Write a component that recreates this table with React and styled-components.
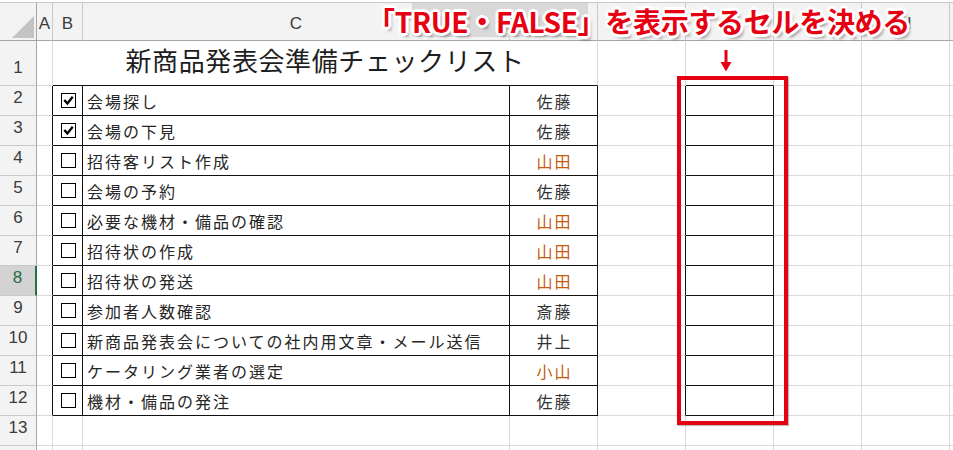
import React from "react";
import styled, { createGlobalStyle } from "styled-components";

const GlobalStyle = createGlobalStyle`
  html, body {
    margin: 0;
    padding: 0;
    background: #ffffff;
  }
  body {
    font-family: "Noto Sans CJK JP", "Liberation Sans", sans-serif;
  }
`;

const LIGHT = "#dadada";
const HEAD_LINE = "#c9c9c9";
const BLACK = "#111111";

const COLS = ["A", "B", "C", "D", "E", "F", "G", "H", "I"];
const HEAD_LABELS = { A: "A", B: "B", C: "C", H: "H" };

const tasks = [
  { done: true, task: "会場探し", who: "佐藤" },
  { done: true, task: "会場の下見", who: "佐藤" },
  { done: false, task: "招待客リスト作成", who: "山田" },
  { done: false, task: "会場の予約", who: "佐藤" },
  { done: false, task: "必要な機材・備品の確認", who: "山田" },
  { done: false, task: "招待状の作成", who: "山田" },
  { done: false, task: "招待状の発送", who: "山田" },
  { done: false, task: "参加者人数確認", who: "斎藤" },
  { done: false, task: "新商品発表会についての社内用文章・メール送信", who: "井上" },
  { done: false, task: "ケータリング業者の選定", who: "小山" },
  { done: false, task: "機材・備品の発注", who: "佐藤" },
];

const orange = ["山田", "小山"];

function App() {
  const renderRow = (n) => {
    const inTable = n >= 2 && n <= 12;
    const item = inTable ? tasks[n - 2] : null;
    const cells = [];
    cells.push(
      <RowHead key={"h" + n} $active={n === 8}>
        {n <= 13 ? n : ""}
      </RowHead>
    );

    if (n === 1) {
      cells.push(<Cell key="A" />);
      cells.push(
        <Title key="title" $bottom={BLACK}>
          新商品発表会準備チェックリスト
        </Title>
      );
      cells.push(<Cell key="E" />);
      cells.push(<Cell key="F" $bottom={BLACK} />);
      cells.push(<Cell key="G" />);
      cells.push(<Cell key="H" />);
      cells.push(<Cell key="I" />);
      return cells;
    }

    COLS.forEach((c) => {
      if (!inTable) {
        cells.push(<Cell key={c} />);
        return;
      }
      if (c === "A" || c === "E") {
        cells.push(<Cell key={c} $right={BLACK} />);
      } else if (c === "B") {
        cells.push(
          <Cell key={c} $right={BLACK} $bottom={BLACK} $center>
            <CheckBox>
              {item.done && (
                <svg width="13" height="13" viewBox="0 0 13 13">
                  <path
                    d="M3 6.8 L5.4 9.4 L10 3.6"
                    fill="none"
                    stroke="#000"
                    strokeWidth="2.3"
                    strokeLinecap="square"
                  />
                </svg>
              )}
            </CheckBox>
          </Cell>
        );
      } else if (c === "C") {
        cells.push(
          <TaskCell key={c} $right={BLACK} $bottom={BLACK}>
            {item.task}
          </TaskCell>
        );
      } else if (c === "D") {
        cells.push(
          <NameCell
            key={c}
            $right={BLACK}
            $bottom={BLACK}
            $orange={orange.includes(item.who)}
          >
            {item.who}
          </NameCell>
        );
      } else if (c === "F") {
        cells.push(<Cell key={c} $right={BLACK} $bottom={BLACK} />);
      } else {
        cells.push(<Cell key={c} />);
      }
    });
    return cells;
  };

  const rowNums = Array.from({ length: 14 }, (_, i) => i + 1);

  return (
    <>
      <GlobalStyle />
      <Sheet>
        <Grid>
          <Corner>
            <svg width="22" height="22" viewBox="0 0 22 22">
              <polygon points="22,0 22,22 0,22" fill="#c3c3c3" />
            </svg>
          </Corner>
          {COLS.map((c) => (
            <ColHead key={c}>{HEAD_LABELS[c] || ""}</ColHead>
          ))}
          {rowNums.map((n) => renderRow(n))}
        </Grid>

        <HeaderShade />
        <Callout>「TRUE・FALSE」を表示するセルを決める</Callout>
        <Arrow>
          <svg width="12" height="22" viewBox="0 0 12 22">
            <rect x="4.5" y="0" width="3" height="14" fill="#e60012" />
            <polygon points="0.5,12 11.5,12 6,21.5" fill="#e60012" />
          </svg>
        </Arrow>
        <Highlight />
      </Sheet>
    </>
  );
}

export default App;

const Sheet = styled.div`
  position: relative;
  width: 953px;
  height: 450px;
  overflow: hidden;
  padding-top: 2px;
  box-sizing: border-box;
`;

const Grid = styled.div`
  display: grid;
  grid-template-columns: 37px 16px 30px 427px 88px 88px 88px 88px 88px 40px;
  grid-template-rows: 39px 45px repeat(13, 30px);
`;

const Cell = styled.div`
  box-sizing: border-box;
  border-right: 1px solid ${(p) => p.$right || LIGHT};
  border-bottom: 1px solid ${(p) => p.$bottom || LIGHT};
  display: flex;
  align-items: center;
  justify-content: ${(p) => (p.$center ? "center" : "flex-start")};
  min-width: 0;
  overflow: visible;
  white-space: nowrap;
`;

const Corner = styled.div`
  box-sizing: border-box;
  background: #f3f3f3;
  border-top: 1px solid ${HEAD_LINE};
  border-right: 1px solid #a6a6a6;
  border-bottom: 1px solid #a6a6a6;
  display: flex;
  align-items: flex-end;
  justify-content: flex-end;
  padding: 0 2px 2px 0;
`;

const ColHead = styled.div`
  box-sizing: border-box;
  background: #f3f3f3;
  border-top: 1px solid ${HEAD_LINE};
  border-right: 1px solid ${HEAD_LINE};
  border-bottom: 1px solid #a6a6a6;
  display: flex;
  align-items: flex-end;
  justify-content: center;
  padding-bottom: 6px;
  font-family: "Liberation Sans", Arial, sans-serif;
  font-size: 17px;
  color: #3b3b3b;
`;

const RowHead = styled.div`
  box-sizing: border-box;
  background: ${(p) => (p.$active ? "#d3d3d3" : "#f3f3f3")};
  border-right: ${(p) => (p.$active ? "2px solid #217346" : "1px solid #a6a6a6")};
  border-bottom: 1px solid ${HEAD_LINE};
  display: flex;
  align-items: flex-end;
  justify-content: center;
  padding-bottom: 7px;
  font-family: "Liberation Sans", Arial, sans-serif;
  font-size: 17px;
  color: ${(p) => (p.$active ? "#1f6b45" : "#3b3b3b")};
`;

const Title = styled(Cell)`
  grid-column: span 3;
  justify-content: center;
  padding-bottom: 6px;
  font-size: 26px;
  letter-spacing: 0.6px;
  color: #1e1e1e;
  line-height: 1;
`;

const TaskCell = styled(Cell)`
  padding-left: 4px;
  font-size: 16px;
  letter-spacing: 2px;
  color: #262626;
  line-height: 1;
`;

const NameCell = styled(Cell)`
  justify-content: center;
  padding-left: 2px;
  font-size: 16px;
  letter-spacing: 2px;
  color: ${(p) => (p.$orange ? "#c55a11" : "#333333")};
  line-height: 1;
`;

const CheckBox = styled.div`
  width: 15px;
  height: 15px;
  box-sizing: border-box;
  border: 1px solid #000;
  display: flex;
  align-items: center;
  justify-content: center;
  margin-left: 1px;
`;

const HeaderShade = styled.div`
  position: absolute;
  left: 412px;
  top: 3px;
  width: 176px;
  height: 34px;
  background: #d9d9d9;
`;

const Callout = styled.div`
  position: absolute;
  left: 367px;
  top: 3px;
  font-family: "Noto Sans CJK JP", sans-serif;
  font-weight: 700;
  font-size: 28px;
  line-height: 36px;
  letter-spacing: -0.3px;
  white-space: nowrap;
  color: #e60012;
  text-shadow:
    2px 0 0 #fff, -2px 0 0 #fff, 0 2px 0 #fff, 0 -2px 0 #fff,
    2px 2px 0 #fff, -2px -2px 0 #fff, 2px -2px 0 #fff, -2px 2px 0 #fff,
    3px 0 0 #fff, -3px 0 0 #fff, 0 3px 0 #fff, 0 -3px 0 #fff,
    3px 4px 3px rgba(0, 0, 0, 0.35);
`;

const Arrow = styled.div`
  position: absolute;
  left: 720px;
  top: 50px;
  width: 12px;
  height: 22px;
  display: flex;
`;

const Highlight = styled.div`
  position: absolute;
  left: 677px;
  top: 76px;
  width: 111px;
  height: 349px;
  box-sizing: border-box;
  border: 4px solid #e50012;
  box-shadow: 1px 1px 1px rgba(0, 0, 0, 0.25);
`;
